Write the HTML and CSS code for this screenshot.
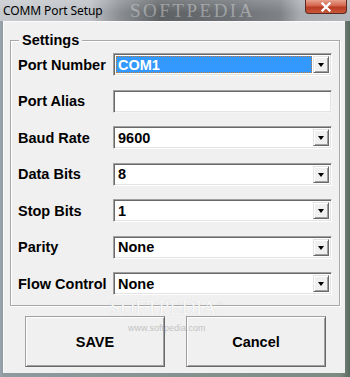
FILE: index.html
```html
<!DOCTYPE html>
<html>
<head>
<meta charset="utf-8">
<link rel="stylesheet" href="styles.css">
</head>
<body>
<div class="window">
  <div class="titlebar">
    <span class="title">COMM Port Setup</span>
    <span class="wm-title">SOFTPEDIA</span>
    <div class="close">
      <svg width="14" height="10" viewBox="0 0 14 10"><path d="M3.5 1.5 L10.5 8.5 M10.5 1.5 L3.5 8.5" stroke="#fff" stroke-width="2.4" stroke-linecap="square" fill="none"/></svg>
    </div>
  </div>
  <div class="client">
    <div class="group">
      <div class="legend">Settings</div>
      <div class="rows">
        <div class="row"><span class="label">Port Number</span><div class="combo"><div class="value selected"><span>COM1</span></div><div class="arrow"><i></i></div></div></div>
        <div class="row"><span class="label">Port Alias</span><div class="combo text"><div class="value"></div></div></div>
        <div class="row"><span class="label">Baud Rate</span><div class="combo"><div class="value">9600</div><div class="arrow"><i></i></div></div></div>
        <div class="row"><span class="label">Data Bits</span><div class="combo"><div class="value">8</div><div class="arrow"><i></i></div></div></div>
        <div class="row"><span class="label">Stop Bits</span><div class="combo"><div class="value">1</div><div class="arrow"><i></i></div></div></div>
        <div class="row"><span class="label">Parity</span><div class="combo"><div class="value">None</div><div class="arrow"><i></i></div></div></div>
        <div class="row"><span class="label">Flow Control</span><div class="combo"><div class="value">None</div><div class="arrow"><i></i></div></div></div>
      </div>
    </div>
    <div class="buttons">
      <div class="btn">SAVE</div>
      <div class="btn">Cancel</div>
    </div>
    <span class="wm-big">SOFTPEDIA<sup>™</sup></span>
    <span class="wm-small">www.softpedia.com</span>
  </div>
</div>
</body>
</html>
```
FILE: styles.css
```css
* { box-sizing: border-box; }
html, body { margin: 0; padding: 0; }
body { width: 350px; height: 377px; overflow: hidden; background: #6f7a74; }

.window {
  width: 350px;
  height: 377px;
  display: flex;
  flex-direction: column;
  padding: 0 5px 4px 3px;
  background: linear-gradient(90deg, #9aa4ac 0px, #8f9aa0 3px, #7d8a82 340px, #5b6a60 350px);
}

.titlebar {
  position: relative;
  height: 21px;
  margin: 0 -5px 0 -3px;
  flex: none;
  display: flex;
  align-items: center;
  background:
    linear-gradient(180deg, rgba(255,255,255,0.18), rgba(255,255,255,0) 60%),
    linear-gradient(90deg, #c6cace 0px, #bcc0c4 90px, #8a8e92 120px, #5d6164 160px, #6c7074 230px, #7e8286 280px, #a9adb1 300px, #b4b8bc 350px);
}
.title {
  padding-left: 3px;
  font-family: "Noto Sans", "Liberation Sans", sans-serif;
  font-size: 12px;
  color: #000;
  line-height: 21px;
  letter-spacing: -0.1px;
}
.wm-title {
  position: absolute;
  left: 130px;
  top: 1px;
  font-family: "Liberation Serif", serif;
  font-size: 19px;
  line-height: 20px;
  letter-spacing: 2.5px;
  color: rgba(255,255,255,0.35);
}
.close {
  position: absolute;
  left: 305px;
  top: 0;
  width: 42px;
  height: 14px;
  border: 1px solid #5a2a22;
  border-top: none;
  border-radius: 0 0 4px 4px;
  background: linear-gradient(180deg, #e8a08e 0%, #d2644c 45%, #b83a22 55%, #c9583a 100%);
  display: flex;
  align-items: center;
  justify-content: center;
}

.client {
  position: relative;
  flex: 1;
  background: #f0f0f0;
  border-top: 1px solid #fbfbfb;
  border-left: 1px solid #fbfbfb;
  display: flex;
  flex-direction: column;
}

.group {
  position: relative;
  margin: 18px 0 0 6px;
  width: 330px;
  border: 1px solid #a8a8a8;
  box-shadow: inset 1px 1px #fff, 1px 1px #fff;
  padding: 12px 7px 10px 7px;
}
.legend {
  position: absolute;
  left: 8px;
  top: -10px;
  padding: 0 3px;
  background: #f0f0f0;
  font-family: "Liberation Sans", Arial, sans-serif;
  font-weight: bold;
  font-size: 14.5px;
  line-height: 18px;
  color: #000;
}

.rows {
  display: flex;
  flex-direction: column;
  gap: 13.5px;
}
.row {
  display: flex;
  align-items: center;
  height: 23px;
}
.label {
  width: 95px;
  flex: none;
  font-family: "Liberation Sans", Arial, sans-serif;
  font-weight: bold;
  font-size: 14.5px;
  color: #000;
  white-space: nowrap;
}
.combo {
  width: 219px;
  height: 23px;
  flex: none;
  display: flex;
  background: #fff;
  border: 1px solid;
  border-color: #a0a0a0 #ffffff #ffffff #a0a0a0;
  box-shadow: inset 1px 1px #696969, inset -1px -1px #e3e3e3;
  padding: 2px 2px 2px 2px;
}
.combo.text {
  border-color: #a0a0a0 #f4f4f4 #f4f4f4 #a0a0a0;
}
.value {
  flex: 1;
  display: flex;
  align-items: center;
  padding-left: 2px;
  font-family: "Liberation Sans", Arial, sans-serif;
  font-weight: bold;
  font-size: 14.5px;
  color: #000;
}
.value.selected {
  background: #3399ff;
  color: #fff;
  border: 1px dotted #c27a3a;
  padding-left: 1px;
  margin-right: 1px;
}
.arrow {
  width: 16px;
  flex: none;
  background: #f0f0f0;
  border: 1px solid;
  border-color: #e3e3e3 #696969 #696969 #e3e3e3;
  box-shadow: inset 1px 1px #fff, inset -1px -1px #a0a0a0;
  display: flex;
  align-items: center;
  justify-content: center;
}
.arrow i {
  display: block;
  width: 0;
  height: 0;
  border-left: 3.5px solid transparent;
  border-right: 3.5px solid transparent;
  border-top: 4px solid #000;
  margin-top: 1px;
}

.buttons {
  display: flex;
  gap: 21px;
  margin: 10px 0 0 21px;
}
.btn {
  width: 140px;
  height: 51px;
  display: flex;
  align-items: center;
  justify-content: center;
  background: #f0f0f0;
  border: 1px solid;
  border-color: #a0a0a0 #696969 #696969 #a0a0a0;
  box-shadow: inset 1px 1px #fff, inset -1px -1px #a0a0a0;
  font-family: "Liberation Sans", Arial, sans-serif;
  font-weight: bold;
  font-size: 14.5px;
  color: #000;
}

.wm-big {
  position: absolute;
  left: 106px;
  top: 275px;
  font-family: "Liberation Serif", serif;
  font-size: 19px;
  letter-spacing: 0.5px;
  color: rgba(255,255,255,0.9);
  text-shadow: 0 0 1px rgba(0,0,0,0.18);
}
.wm-big sup { font-size: 8px; }
.wm-small {
  position: absolute;
  left: 124px;
  top: 301px;
  font-family: "Liberation Sans Narrow", "Liberation Sans", sans-serif;
  font-size: 9px;
  color: rgba(150,150,150,0.55);
}
```
